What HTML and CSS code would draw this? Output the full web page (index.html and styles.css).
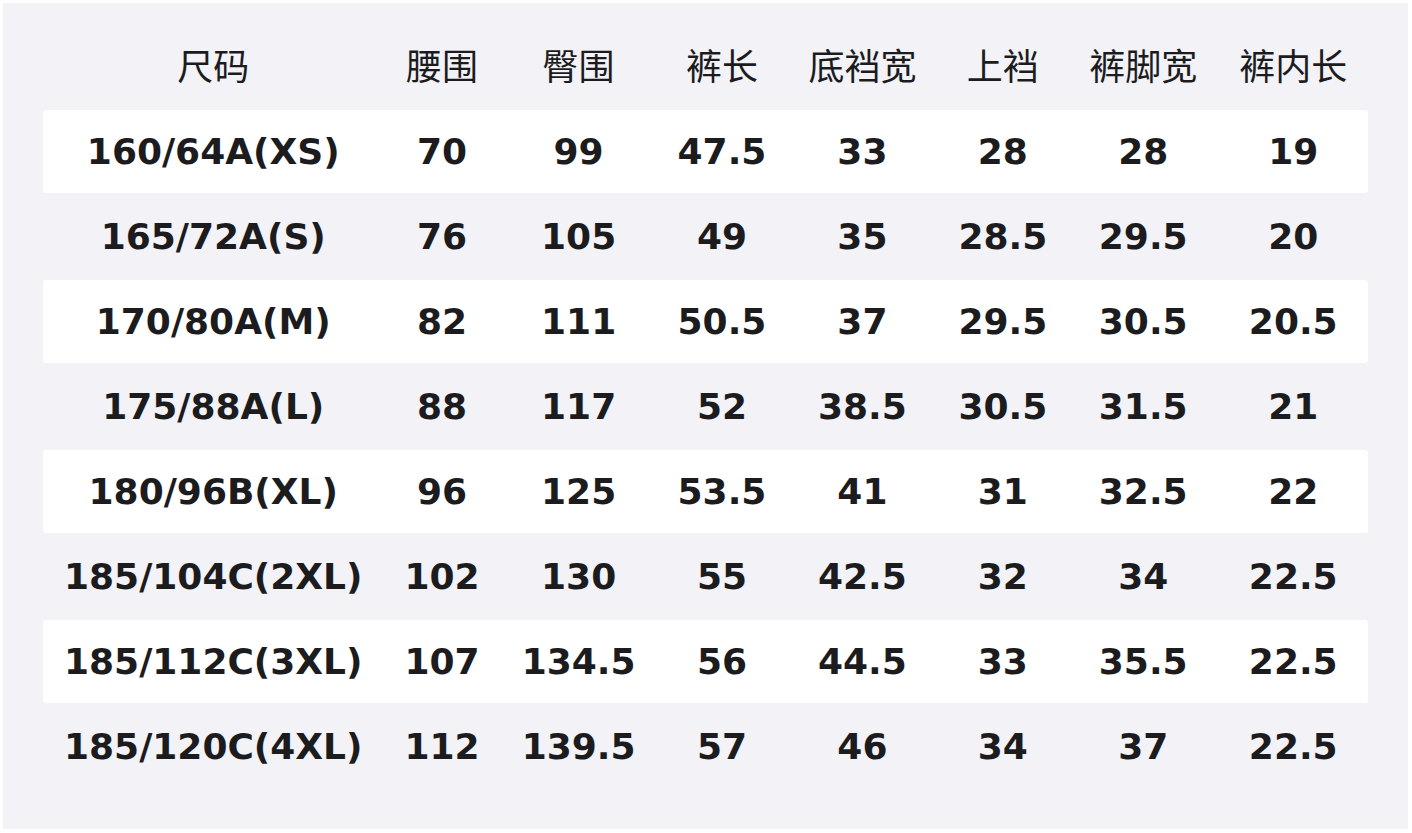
FILE: index.html
```html
<!DOCTYPE html>
<html lang="zh">
<head>
<meta charset="utf-8">
<title>尺码表</title>
<link rel="stylesheet" href="styles.css">
</head>
<body>
<div class="page">
  <div class="panel">
    <table class="size-table">
      <thead>
        <tr>
          <th>尺码</th><th>腰围</th><th>臀围</th><th>裤长</th><th>底裆宽</th><th>上裆</th><th>裤脚宽</th><th>裤内长</th>
        </tr>
      </thead>
      <tbody>
        <tr><td>160/64A(XS)</td><td>70</td><td>99</td><td>47.5</td><td>33</td><td>28</td><td>28</td><td>19</td></tr>
        <tr><td>165/72A(S)</td><td>76</td><td>105</td><td>49</td><td>35</td><td>28.5</td><td>29.5</td><td>20</td></tr>
        <tr><td>170/80A(M)</td><td>82</td><td>111</td><td>50.5</td><td>37</td><td>29.5</td><td>30.5</td><td>20.5</td></tr>
        <tr><td>175/88A(L)</td><td>88</td><td>117</td><td>52</td><td>38.5</td><td>30.5</td><td>31.5</td><td>21</td></tr>
        <tr><td>180/96B(XL)</td><td>96</td><td>125</td><td>53.5</td><td>41</td><td>31</td><td>32.5</td><td>22</td></tr>
        <tr><td>185/104C(2XL)</td><td>102</td><td>130</td><td>55</td><td>42.5</td><td>32</td><td>34</td><td>22.5</td></tr>
        <tr><td>185/112C(3XL)</td><td>107</td><td>134.5</td><td>56</td><td>44.5</td><td>33</td><td>35.5</td><td>22.5</td></tr>
        <tr><td>185/120C(4XL)</td><td>112</td><td>139.5</td><td>57</td><td>46</td><td>34</td><td>37</td><td>22.5</td></tr>
      </tbody>
    </table>
  </div>
</div>
</body>
</html>
```

FILE: styles.css
```css
html, body {
  margin: 0;
  padding: 0;
  background: #ffffff;
}

.page {
  padding: 3px;
}

.panel {
  width: 1405px;
  height: 826px;
  box-sizing: border-box;
  background: #f2f2f7;
  padding: 20px 40px 0 40px;
}

.size-table {
  width: 1325px;
  border-collapse: separate;
  border-spacing: 0 2px;
  table-layout: auto;
  color: #1c1c1e;
}

.size-table th,
.size-table td {
  height: 83px;
  padding: 0 21px;
  text-align: center;
  vertical-align: middle;
  white-space: nowrap;
  box-sizing: border-box;
}

.size-table th {
  font-family: "DejaVu Sans", "Noto Sans CJK SC", sans-serif;
  font-weight: 400;
  font-size: 36px;
  color: #1c1c1e;
  padding-bottom: 6px;
}

.size-table td {
  font-family: "DejaVu Sans", "Noto Sans CJK SC", sans-serif;
  font-weight: 700;
  font-size: 36px;
}

.size-table tbody tr:nth-child(odd) td {
  background: #ffffff;
}

.size-table tbody tr:nth-child(odd) td:first-child {
  border-radius: 3px 0 0 3px;
}

.size-table tbody tr:nth-child(odd) td:last-child {
  border-radius: 0 3px 3px 0;
}
```
